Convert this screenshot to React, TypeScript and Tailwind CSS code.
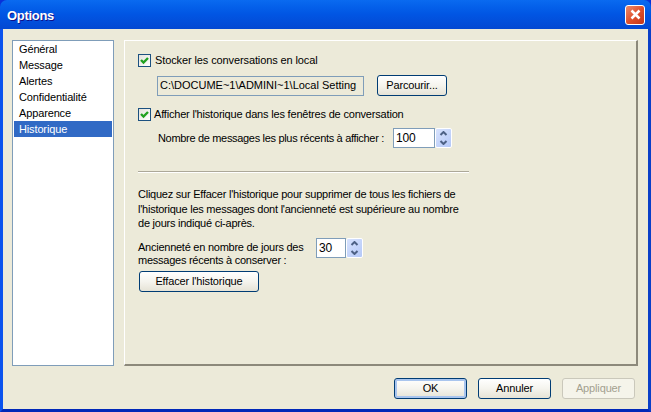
import React from "react";

const menuItems = ["Général", "Message", "Alertes", "Confidentialité", "Apparence", "Historique"];

function XpCheckbox() {
  return (
    <span className="flex h-[13px] w-[13px] shrink-0 items-center justify-center border border-[#1c5180] bg-gradient-to-br from-[#e4e3dc] to-white">
      <svg width="11" height="11" viewBox="0 0 11 11">
        <path d="M2 5 L4.5 7.5 L9 3" fill="none" stroke="#21a121" strokeWidth="2.4" />
      </svg>
    </span>
  );
}

function XpButton({ label, className, isDefault }: { label: string; className: string; isDefault?: boolean }) {
  return (
    <button
      className={
        "flex h-[21px] items-center justify-center rounded-[3px] border border-[#003c74] bg-gradient-to-b from-white via-[#f5f4ee] to-[#e6e3d6] text-black " +
        (isDefault ? "shadow-[inset_0_0_0_2px_#a9c5ee] " : "") +
        className
      }
    >
      {label}
    </button>
  );
}

function Spinner() {
  return (
    <div className="flex h-[20px] w-[17px] flex-col rounded-[2px] border border-white bg-gradient-to-br from-[#d8e3fd] to-[#b4c8f8]">
      <div className="flex flex-1 items-center justify-center">
        <svg width="9" height="5" viewBox="0 0 9 5">
          <path d="M1.5 4 L4.5 1 L7.5 4" fill="none" stroke="#4d6185" strokeWidth="2" />
        </svg>
      </div>
      <div className="flex flex-1 items-center justify-center">
        <svg width="9" height="5" viewBox="0 0 9 5">
          <path d="M1.5 1 L4.5 4 L7.5 1" fill="none" stroke="#4d6185" strokeWidth="2" />
        </svg>
      </div>
    </div>
  );
}

export default function App() {
  return (
    <div className="flex h-[412px] w-[651px] flex-col overflow-hidden bg-[#0831d9] font-['Liberation_Sans',sans-serif] text-[11px] tracking-[-0.14px] text-black">
      {/* title bar */}
      <div className="flex h-[29px] shrink-0 items-center justify-between rounded-t-[7px] bg-gradient-to-b from-[#0a6af0] via-[#0155e3] to-[#0348d2] pl-[7px] pr-[6px]">
        <span className="pt-[3px] text-[13px] font-bold tracking-[-0.3px] text-white [text-shadow:1px_1px_0_#0f1089]">Options</span>
        <div className="flex h-[20px] w-[20px] items-center justify-center rounded-[3px] border border-white bg-gradient-to-br from-[#e98a6c] via-[#e0512c] to-[#c2351a]">
          <svg width="13" height="13" viewBox="0 0 13 13">
            <path d="M2.5 2.5 L10.5 10.5 M10.5 2.5 L2.5 10.5" stroke="white" strokeWidth="2.5" />
          </svg>
        </div>
      </div>

      {/* dialog body */}
      <div className="flex min-h-0 flex-1 flex-col border-x-[3px] border-b-[3px] border-b-[#0028b8] border-l-[#0b53ee] border-r-[#0a3fc8] bg-[#ecead9]">
        <div className="flex h-[337px] shrink-0 pl-[9px] pr-[10px] pt-[11px]">
          <ul className="mr-[10px] w-[102px] shrink-0 border border-[#7f9db9] bg-white p-px pt-0">
            {menuItems.map((item) => (
              <li
                key={item}
                className={
                  "flex h-[16px] items-center pl-[5px] " +
                  (item === "Historique" ? "bg-[#316ac5] text-white" : "")
                }
              >
                {item}
              </li>
            ))}
          </ul>

          <div className="flex-1 border border-b-2 border-r-2 border-b-[#8c897b] border-l-white border-r-[#8c897b] border-t-white pl-[13px] pt-[13px]">
            <label className="flex h-[13px] items-center gap-[4px]">
              <XpCheckbox />
              <span className="tracking-[-0.11px]">Stocker les conversations en local</span>
            </label>

            <div className="ml-[19px] mt-[8px] flex items-center gap-[13px]">
              <div className="flex h-[20px] w-[207px] items-center overflow-hidden whitespace-nowrap border border-[#7f9db9] pl-[2px] tracking-normal">
                C:\DOCUME~1\ADMINI~1\Local Setting
              </div>
              <XpButton label="Parcourir..." className="w-[70px]" />
            </div>

            <label className="mt-[12px] flex h-[13px] items-center gap-[3px]">
              <XpCheckbox />
              <span className="tracking-[-0.19px]">Afficher l'historique dans les fenêtres de conversation</span>
            </label>

            <div className="ml-[20px] mt-[7px] flex items-center">
              <span className="w-[235px] whitespace-nowrap tracking-[-0.32px]">Nombre de messages les plus récents à afficher :</span>
              <div className="flex h-[20px] w-[42px] items-center border border-[#7f9db9] bg-white pl-[2px] text-[12px]">100</div>
              <Spinner />
            </div>

            <div className="mt-[23px] h-[2px] w-[331px] border-b border-t border-b-white border-t-[#aca899]" />

            <p className="mt-[14px] whitespace-nowrap leading-[14.5px] tracking-[-0.24px]">
              Cliquez sur Effacer l'historique pour supprimer de tous les fichiers de
              <br />
              l'historique les messages dont l'ancienneté est supérieure au nombre
              <br />
              de jours indiqué ci-après.
            </p>

            <div className="mt-[7px] flex items-start">
              <p className="w-[178px] whitespace-nowrap pt-[3px] leading-[13.5px] tracking-[-0.25px]">
                Ancienneté en nombre de jours des
                <br />
                messages récents à conserver :
              </p>
              <div className="flex h-[20px] w-[30px] items-center border border-[#7f9db9] bg-white pl-[2px] text-[12px]">30</div>
              <Spinner />
            </div>

            <XpButton label="Effacer l'historique" className="ml-px mt-[3px] w-[120px]" />
          </div>
        </div>

        <div className="flex flex-1 items-start justify-end gap-[11px] pr-[13px] pt-[12px]">
          <XpButton label="OK" className="w-[73px]" isDefault />
          <XpButton label="Annuler" className="w-[73px]" />
          <button className="flex h-[21px] w-[73px] items-center justify-center rounded-[3px] border border-[#cac8bb] bg-[#f5f4ea] text-[#a3a08f]">
            Appliquer
          </button>
        </div>
      </div>
    </div>
  );
}
